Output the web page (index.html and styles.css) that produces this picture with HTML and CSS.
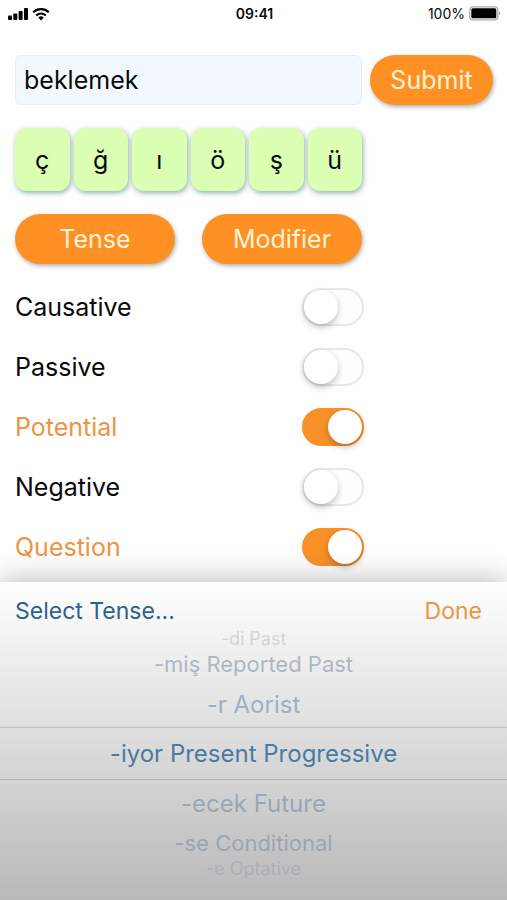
FILE: index.html
```html
<!DOCTYPE html>
<html lang="en">
<head>
  <meta charset="UTF-8" />
  <meta name="viewport" content="width=device-width, initial-scale=1.0"/>
  <title>Turkish Verbs</title>
  <link rel="stylesheet" href="styles.css">
</head>
<body>
  <header class="status-bar">
    <div class="status-left">
      <svg class="signal" width="20" height="14" viewBox="0 0 20 14" aria-hidden="true">
        <rect x="0" y="8.500" width="4" height="4.500" rx="1"/>
        <rect x="5.300" y="6.500" width="4" height="6.500" rx="1"/>
        <rect x="10.600" y="4" width="4" height="9" rx="1"/>
        <rect x="16" y="1" width="4" height="12" rx="1"/>
      </svg>
      <svg class="wifi" width="18" height="14" viewBox="0 0 18 14" aria-hidden="true">
        <path d="M1.200 5.200a11.200 11.200 0 0 1 15.600 0" fill="none" stroke="#000" stroke-width="2.200"/>
        <path d="M4.200 8.400a7 7 0 0 1 9.600 0" fill="none" stroke="#000" stroke-width="2"/>
        <path d="M6.300 10.600a4 4 0 0 1 5.400 0L9 13.400z"/>
      </svg>
    </div>
    <div class="status-time">09:41</div>
    <div class="status-right">
      <span>100%</span>
      <svg width="32" height="15" viewBox="0 0 32 15" aria-hidden="true">
        <rect x="0.800" y="0.800" width="28" height="13" rx="3" fill="#fff" stroke="#aaa" stroke-width="1.300"/>
        <rect x="2.300" y="2.300" width="25" height="10" rx="1.500"/>
        <path d="M30.300 5.500v3.600a2 2 0 0 0 0-3.600z" fill="#888"/>
      </svg>
    </div>
  </header>

  <form class="verb-form" onsubmit="return false">
    <input class="verb-input" type="text" value="beklemek" aria-label="Verb" />
    <button class="pill" type="submit">Submit</button>

    <div class="letters">
      <button class="letter" type="button">ç</button>
      <button class="letter" type="button">ğ</button>
      <button class="letter" type="button">ı</button>
      <button class="letter" type="button">ö</button>
      <button class="letter" type="button">ş</button>
      <button class="letter" type="button">ü</button>
    </div>

    <div class="choices">
      <button class="pill" type="button">Tense</button>
      <button class="pill" type="button">Modifier</button>
    </div>

    <div class="options">
      <div class="option">
        <label for="causative">Causative</label>
        <input class="toggle" type="checkbox" id="causative" />
      </div>
      <div class="option">
        <label for="passive">Passive</label>
        <input class="toggle" type="checkbox" id="passive" />
      </div>
      <div class="option">
        <label for="potential">Potential</label>
        <input class="toggle" type="checkbox" id="potential" checked />
      </div>
      <div class="option">
        <label for="negative">Negative</label>
        <input class="toggle" type="checkbox" id="negative" />
      </div>
      <div class="option">
        <label for="question">Question</label>
        <input class="toggle" type="checkbox" id="question" checked />
      </div>
    </div>
  </form>

  <section class="picker">
    <div class="picker-header">
      <h2>Select Tense...</h2>
      <button class="done" type="button">Done</button>
    </div>
    <div class="wheel">
      <label class="tense edge"><input type="radio" name="tense" />-di Past</label>
      <label class="tense far"><input type="radio" name="tense" />-miş Reported Past</label>
      <label class="tense near"><input type="radio" name="tense" />-r Aorist</label>
      <label class="tense selected"><input type="radio" name="tense" checked />-iyor Present Progressive</label>
      <label class="tense near"><input type="radio" name="tense" />-ecek Future</label>
      <label class="tense far"><input type="radio" name="tense" />-se Conditional</label>
      <label class="tense edge"><input type="radio" name="tense" />-e Optative</label>
    </div>
  </section>
</body>
</html>
```
FILE: styles.css
```css
* {
  box-sizing: border-box;
}

body {
  margin: 0;
  min-height: 100vh;
  display: flex;
  flex-direction: column;
  background-color: #fefefe;
  color: #0a0a0a;
  font-family: Inter, "Liberation Sans", sans-serif;
  font-size: 25px;
}

button, input {
  font: inherit;
}

button {
  border: none;
  padding: 0;
  cursor: pointer;
}

.status-bar {
  display: grid;
  grid-template-columns: 1fr auto 1fr;
  align-items: center;
  height: 27px;
  padding: 0 6px 0 8px;
  font-size: 14px;
}

.status-left, .status-right {
  display: flex;
  align-items: center;
  gap: 4px;
}

.status-right {
  justify-content: flex-end;
}

.status-time {
  font-weight: 600;
}

.verb-form {
  display: grid;
  grid-template-columns: minmax(0, 1fr) 123px;
  column-gap: 8px;
  row-gap: 23px;
  padding: 28px 14px 5px 15px;
}

.verb-input {
  width: 100%;
  height: 50px;
  padding: 0 8px;
  border: 1px solid #e8edf2;
  border-radius: 6px;
  background-color: #f3f8ff;
  color: #0a0a0a;
}

.pill {
  height: 50px;
  border-radius: 25px;
  background-color: #ff9124;
  color: #fff3d6;
  box-shadow: 1px 2px 4px rgba(0, 0, 0, 0.3);
}

.letters, .choices, .options {
  grid-column: 1;
}

.letters {
  display: flex;
  gap: 4px;
}

.letter {
  flex: 1;
  height: 63px;
  border-radius: 12px;
  background-color: #dbffb3;
  color: #0a0a0a;
  box-shadow: 1px 2px 5px rgba(30, 110, 90, 0.5);
}

.choices {
  display: grid;
  grid-template-columns: 1fr 1fr;
  gap: 27px;
}

.options {
  margin: -10px -2px 0 0;
}

.option {
  display: flex;
  align-items: center;
  justify-content: space-between;
  height: 60px;
}

.option:has(:checked) {
  color: #ee9442;
}

.toggle {
  appearance: none;
  display: flex;
  align-items: center;
  width: 62px;
  height: 38px;
  margin: 0;
  border: 2px solid #e8e8e8;
  border-radius: 19px;
  background-color: #fdfdfd;
}

.toggle::before {
  content: "";
  width: 34px;
  height: 34px;
  border-radius: 50%;
  background-color: #fff;
  box-shadow: 0 3px 6px rgba(0, 0, 0, 0.25);
}

.toggle:checked {
  justify-content: flex-end;
  border-color: #fa9128;
  background-color: #fa9128;
}

/* bottom sheet with the tense wheel */
.picker {
  flex: 1;
  background: linear-gradient(#fff, #dedede 47%, #b9b9b9);
  box-shadow: 0 0 28px rgba(0, 0, 0, 0.3);
}

.picker-header {
  display: flex;
  align-items: center;
  justify-content: space-between;
  height: 48px;
  padding: 10px 25px 0 15px;
  font-size: 23px;
}

.picker-header h2 {
  margin: 0;
  font-size: 23px;
  font-weight: 400;
  color: #2c628c;
}

.done {
  background: none;
  color: #ee9442;
}

.wheel {
  display: flex;
  flex-direction: column;
}

.tense {
  display: flex;
  align-items: center;
  justify-content: center;
  white-space: nowrap;
  cursor: pointer;
}

.tense input {
  appearance: none;
  width: 0;
  height: 0;
  margin: 0;
}

.selected {
  height: 53px;
  border-top: 1px solid #c2c2c2;
  border-bottom: 1px solid #b4b4b4;
  font-size: 24px;
  color: #4a7ba3;
}

.near {
  height: 46px;
  font-size: 24px;
  color: rgba(120, 145, 172, 0.65);
}

.far {
  height: 34px;
  font-size: 22px;
  color: rgba(115, 138, 162, 0.55);
}

.edge {
  height: 17px;
  font-size: 18px;
  color: rgba(115, 138, 162, 0.3);
}
```
